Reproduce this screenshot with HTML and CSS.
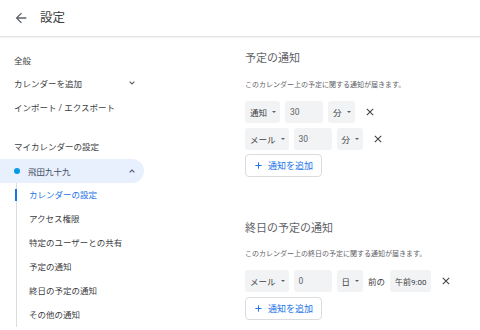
FILE: index.html
```html
<!DOCTYPE html>
<html lang="ja">
<head>
    <meta charset="UTF-8">
    <title>設定</title>
    <link rel="stylesheet" href="styles.css">
</head>
<body>
    <header class="topbar">
        <button class="back">
            <svg viewBox="0 0 24 24"><path d="M20 11H7.83l5.59-5.59L12 4l-8 8 8 8 1.41-1.41L7.83 13H20v-2z"/></svg>
        </button>
        <h1>設定</h1>
    </header>

    <div class="main">
        <nav class="sidebar">
            <a class="nav-item">全般</a>
            <a class="nav-item">カレンダーを追加
                <svg class="chev" viewBox="0 0 6 4"><path d="M0.6 0.6L3 3L5.4 0.6"/></svg>
            </a>
            <a class="nav-item">インポート / エクスポート</a>

            <div class="nav-title">マイカレンダーの設定</div>
            <a class="nav-cal">
                <span class="dot"></span>
                <span class="cal-name">飛田九十九</span>
                <svg class="chev" viewBox="0 0 6 4"><path d="M0.6 3.4L3 1L5.4 3.4"/></svg>
            </a>
            <div class="subnav">
                <a class="sub-item active">カレンダーの設定</a>
                <a class="sub-item">アクセス権限</a>
                <a class="sub-item">特定のユーザーとの共有</a>
                <a class="sub-item">予定の通知</a>
                <a class="sub-item">終日の予定の通知</a>
                <a class="sub-item">その他の通知</a>
            </div>
        </nav>

        <section class="content">
            <div class="block">
                <h2>予定の通知</h2>
                <p class="desc">このカレンダー上の予定に関する通知が届きます。</p>
                <div class="notif-row">
                    <div class="select">通知<span class="caret"></span></div>
                    <div class="field">30</div>
                    <div class="select">分<span class="caret"></span></div>
                    <button class="remove"><svg viewBox="0 0 10 10"><path d="M1 1L9 9M9 1L1 9"/></svg></button>
                </div>
                <div class="notif-row">
                    <div class="select">メール<span class="caret"></span></div>
                    <div class="field">30</div>
                    <div class="select">分<span class="caret"></span></div>
                    <button class="remove"><svg viewBox="0 0 10 10"><path d="M1 1L9 9M9 1L1 9"/></svg></button>
                </div>
                <button class="add"><svg viewBox="0 0 10 10"><path d="M5 0.5V9.5M0.5 5H9.5"/></svg>通知を追加</button>
            </div>

            <div class="block block-allday">
                <h2>終日の予定の通知</h2>
                <p class="desc">このカレンダー上の終日の予定に関する通知が届きます。</p>
                <div class="notif-row">
                    <div class="select">メール<span class="caret"></span></div>
                    <div class="field">0</div>
                    <div class="select">日<span class="caret"></span></div>
                    <span class="before">前の</span>
                    <div class="time">午前9:00</div>
                    <button class="remove"><svg viewBox="0 0 10 10"><path d="M1 1L9 9M9 1L1 9"/></svg></button>
                </div>
                <button class="add"><svg viewBox="0 0 10 10"><path d="M5 0.5V9.5M0.5 5H9.5"/></svg>通知を追加</button>
            </div>
        </section>
    </div>
</body>
</html>
```

FILE: styles.css
```css
body {
    margin: 0;
    background: #fff;
    color: #3c4043;
    font-family: Roboto, "Noto Sans CJK JP", sans-serif;
    overflow: hidden;
}

a {
    text-decoration: none;
    color: inherit;
}

button {
    font-family: inherit;
    background: none;
    border: none;
    padding: 0;
    cursor: pointer;
}

/* top bar */
.topbar {
    box-sizing: border-box;
    height: 37px;
    display: flex;
    align-items: center;
    padding-left: 13px;
    border-bottom: 1px solid #e3e3e3;
    box-shadow: 0 1px 1px rgba(60, 64, 67, 0.06);
}
.back {
    width: 16px;
    height: 16px;
    display: flex;
}
.back svg {
    width: 16px;
    height: 16px;
    fill: #5f6368;
}
.topbar h1 {
    margin: 0 0 0 11px;
    font-size: 12.5px;
    font-weight: 400;
    line-height: 16px;
    color: #3c4043;
}

.main {
    display: flex;
}

/* sidebar */
.sidebar {
    width: 144px;
    flex-shrink: 0;
    padding-top: 11px;
    font-size: 8.5px;
}
.nav-item {
    height: 23.5px;
    display: flex;
    align-items: center;
    justify-content: space-between;
    padding: 0 9px 0 14px;
}
.chev {
    width: 6px;
    height: 4px;
    fill: none;
    stroke: #5f6368;
    stroke-width: 1.2;
}
.nav-title {
    margin-top: 16px;
    height: 24px;
    line-height: 24px;
    padding-left: 14px;
}
.nav-cal {
    height: 24px;
    display: flex;
    align-items: center;
    padding: 0 9px 0 14px;
    background: #e8f0fe;
    border-radius: 0 12px 12px 0;
    color: #3f4a5e;
}
.dot {
    width: 6px;
    height: 6px;
    border-radius: 50%;
    background: #039be5;
    margin-right: 8px;
}
.cal-name {
    flex: 1;
}
.nav-cal .chev {
    stroke: #56607a;
}
.subnav {
    margin-left: 16px;
    border-left: 1px solid #dadce0;
}
.sub-item {
    position: relative;
    display: block;
    height: 24px;
    line-height: 24px;
    padding-left: 12px;
}
.sub-item.active {
    color: #1a73e8;
}
.sub-item.active::before {
    content: "";
    position: absolute;
    left: -2px;
    top: 6px;
    width: 2px;
    height: 12px;
    background: #1a73e8;
}

/* content */
.content {
    margin-left: 101px;
    padding-top: 14px;
}
.block h2 {
    margin: 0;
    font-size: 11px;
    font-weight: 400;
    line-height: 16px;
    color: #5f6368;
}
.desc {
    margin: 13px 0 11px;
    font-size: 7px;
    line-height: 10px;
    color: #5f6368;
}
.block-allday {
    margin-top: 44px;
}
.block-allday .desc {
    margin-top: 12px;
}
.notif-row {
    display: flex;
    align-items: center;
    gap: 5px;
    height: 22px;
    margin-bottom: 5px;
    font-size: 8.5px;
}
.select,
.field,
.time {
    box-sizing: border-box;
    height: 22px;
    display: flex;
    align-items: center;
    background: #f1f3f4;
    border-radius: 3px;
}
.select {
    padding: 0 4px 0 5px;
}
.caret {
    margin-left: 5px;
    width: 0;
    height: 0;
    border-left: 2.5px solid transparent;
    border-right: 2.5px solid transparent;
    border-top: 2.5px solid #5f6368;
}
.field {
    width: 38px;
    padding-left: 5px;
    color: #5f6368;
}
.time {
    padding: 0 5px;
    font-size: 8px;
}
.before {
    font-size: 8.5px;
}
.remove {
    width: 20px;
    height: 20px;
    display: flex;
    align-items: center;
    justify-content: center;
}
.remove svg {
    width: 8px;
    height: 8px;
    stroke: #3c4043;
    stroke-width: 1.3;
}
.add {
    margin-top: -1px;
    height: 23px;
    display: flex;
    align-items: center;
    gap: 6px;
    padding: 0 8px 0 9px;
    border: 1px solid #dadce0;
    border-radius: 4px;
    color: #1a73e8;
    font-size: 9px;
}
.add svg {
    width: 7px;
    height: 7px;
    stroke: #1a73e8;
    stroke-width: 1.4;
}
.block-allday .add {
    margin-top: 1px;
}
```
